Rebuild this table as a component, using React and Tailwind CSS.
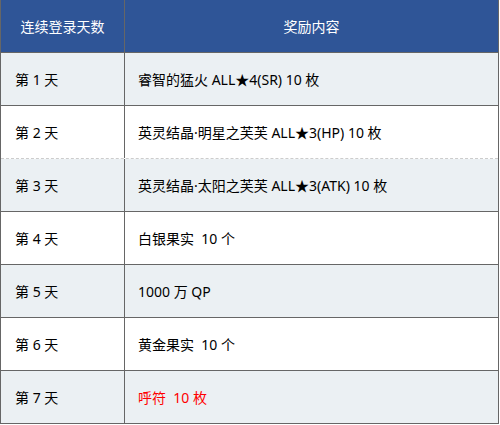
import React from "react";

const rows = [
  { day: "第 1 天", reward: "睿智的猛火 ALL★4(SR) 10 枚", shade: true },
  { day: "第 2 天", reward: "英灵结晶·明星之芙芙 ALL★3(HP) 10 枚", dashed: true },
  { day: "第 3 天", reward: "英灵结晶·太阳之芙芙 ALL★3(ATK) 10 枚", shade: true },
  { day: "第 4 天", reward: "白银果实  10 个" },
  { day: "第 5 天", reward: "1000 万 QP", shade: true },
  { day: "第 6 天", reward: "黄金果实  10 个" },
  { day: "第 7 天", reward: "呼符  10 枚", shade: true, red: true },
];

const App = () => {
  return (
    <div
      className="w-[499px] border-l border-r border-[#666] text-[14px] text-black"
      style={{ fontFamily: '"Noto Sans", "Noto Sans CJK SC", sans-serif' }}
    >
      {/* header */}
      <div className="flex h-[53px] bg-[#2f5597] text-white border-b border-[#666]">
        <div className="w-[124px] flex items-center justify-center border-r border-[#666]">
          连续登录天数
        </div>
        <div className="flex-1 flex items-center justify-center">奖励内容</div>
      </div>

      {rows.map((row, i) => (
        <div
          key={i}
          className={`flex h-[53px] border-b ${
            row.dashed ? "border-dashed border-[#ccc]" : "border-[#666]"
          } ${row.shade ? "bg-[#ebf0f3]" : "bg-white"}`}
        >
          <div className="w-[124px] flex items-center pl-[14px] border-r border-solid border-[#666]">
            {row.day}
          </div>
          <div
            className={`flex-1 flex items-center pl-[13px] whitespace-pre ${
              row.red ? "text-[#ff0000]" : ""
            }`}
          >
            {row.reward}
          </div>
        </div>
      ))}
    </div>
  );
};

export default App;
